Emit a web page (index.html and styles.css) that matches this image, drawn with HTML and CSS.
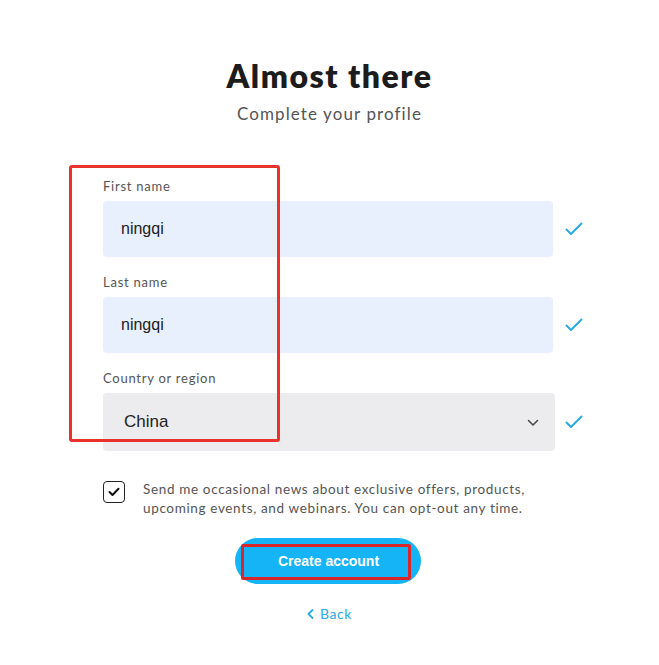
FILE: index.html
```html
<!DOCTYPE html>
<html>
<head>
<meta charset="utf-8">
<link rel="stylesheet" href="styles.css">
</head>
<body>
<div class="page">
  <h1 class="title">Almost there</h1>
  <p class="subtitle">Complete your profile</p>

  <div class="form">
    <div class="annot-box"></div>
    <div class="field">
      <label class="label">First name</label>
      <div class="row">
        <div class="input">ningqi</div>
        <svg class="ok" viewBox="0 0 18 14" width="18" height="14"><path d="M1.5 7.5 L6 12 L16.5 1.5" fill="none" stroke="#29abe2" stroke-width="2" stroke-linecap="round" stroke-linejoin="round"/></svg>
      </div>
    </div>
    <div class="field">
      <label class="label">Last name</label>
      <div class="row">
        <div class="input">ningqi</div>
        <svg class="ok" viewBox="0 0 18 14" width="18" height="14"><path d="M1.5 7.5 L6 12 L16.5 1.5" fill="none" stroke="#29abe2" stroke-width="2" stroke-linecap="round" stroke-linejoin="round"/></svg>
      </div>
    </div>
    <div class="field">
      <label class="label">Country or region</label>
      <div class="row">
        <div class="select">
          <span>China</span>
          <svg class="chev" viewBox="0 0 12 8" width="12" height="8"><path d="M1.5 1.5 L6 6 L10.5 1.5" fill="none" stroke="#444" stroke-width="1.5" stroke-linecap="round" stroke-linejoin="round"/></svg>
        </div>
        <svg class="ok" viewBox="0 0 18 14" width="18" height="14"><path d="M1.5 7.5 L6 12 L16.5 1.5" fill="none" stroke="#29abe2" stroke-width="2" stroke-linecap="round" stroke-linejoin="round"/></svg>
      </div>
    </div>

    <div class="consent">
      <span class="checkbox"><svg viewBox="0 0 12 10" width="12" height="10"><path d="M1.5 5 L4.5 8 L10.5 1.8" fill="none" stroke="#111" stroke-width="2" stroke-linecap="round" stroke-linejoin="round"/></svg></span>
      <p class="consent-text">Send me occasional news about exclusive offers, products, upcoming events, and webinars. You can opt-out any time.</p>
    </div>
  </div>

  <button class="btn"><span class="btn-annot"></span>Create account</button>
  <a class="back"><svg viewBox="0 0 7 10" width="7" height="10"><path d="M5.5 1 L1.5 5 L5.5 9" fill="none" stroke="#29abe2" stroke-width="1.8" stroke-linecap="round" stroke-linejoin="round"/></svg>Back</a>
</div>
</body>
</html>
```
FILE: styles.css
```css
* { box-sizing: border-box; }
html, body { margin: 0; padding: 0; background: #fff; }
body { font-family: "Lato", "Noto Sans", sans-serif; color: #1c1c1c; }

.page {
  width: 659px;
  display: flex;
  flex-direction: column;
  align-items: center;
  padding-top: 56px;
}

.title {
  margin: 0;
  font-size: 32px;
  line-height: 40px;
  font-weight: 800;
  color: #1c1c1c;
  letter-spacing: 1.5px;
}

.subtitle {
  margin: 6px 0 0;
  font-size: 17px;
  line-height: 24px;
  color: #555;
  letter-spacing: 1.1px;
}

.form {
  position: relative;
  align-self: flex-start;
  margin: 51px 0 0 103px;
  width: 480px;
  display: flex;
  flex-direction: column;
  gap: 16px;
}

.annot-box {
  position: absolute;
  left: -34px;
  top: -12px;
  width: 211px;
  height: 277px;
  border: 3px solid #e8322b;
  border-radius: 3px;
  pointer-events: none;
  z-index: 2;
}

.field { display: flex; flex-direction: column; gap: 6px; }

.label {
  font-size: 13px;
  line-height: 18px;
  color: #555;
  letter-spacing: 0.75px;
}

.row { display: flex; align-items: center; gap: 12px; }

.input {
  width: 450px;
  height: 56px;
  background: #e8f0fe;
  border-radius: 4px;
  display: flex;
  align-items: center;
  padding-left: 18px;
  font-family: "Liberation Sans", Arial, sans-serif;
  font-size: 16px;
  color: #222;
}

.select {
  width: 452px;
  height: 58px;
  background: #ececee;
  border-radius: 4px;
  display: flex;
  align-items: center;
  justify-content: space-between;
  padding: 0 16px 0 21px;
  font-family: "Liberation Sans", Arial, sans-serif;
  font-size: 17px;
  color: #222;
}

.select + .ok { margin-left: -2px; }

.chev { margin-top: 2px; }

.ok { flex: none; }

.consent {
  display: flex;
  align-items: flex-start;
  gap: 18px;
  margin-top: 13px;
}

.checkbox {
  flex: none;
  width: 22px;
  height: 22px;
  margin-top: 1px;
  border: 1.5px solid #222;
  border-radius: 4px;
  display: flex;
  align-items: center;
  justify-content: center;
}

.consent-text {
  margin: 0;
  max-width: 395px;
  font-size: 13.5px;
  line-height: 19px;
  color: #555;
  letter-spacing: 0.65px;
}

.btn {
  position: relative;
  margin: 20px 3px 0 0;
  width: 186px;
  height: 46px;
  border: none;
  border-radius: 23px;
  background: #14b4f6;
  color: #fff;
  font-family: "Liberation Sans", Arial, sans-serif;
  font-weight: 700;
  font-size: 14px;
  padding: 0 0 0 1px;
  cursor: pointer;
}

.btn-annot {
  position: absolute;
  left: 6px;
  top: 6px;
  width: 170px;
  height: 36px;
  border: 3px solid #d8262b;
  border-radius: 2px;
}

.back {
  margin-top: 20px;
  display: flex;
  align-items: center;
  gap: 6px;
  font-size: 14px;
  line-height: 20px;
  color: #29abe2;
  text-decoration: none;
  letter-spacing: 0.6px;
}
```
